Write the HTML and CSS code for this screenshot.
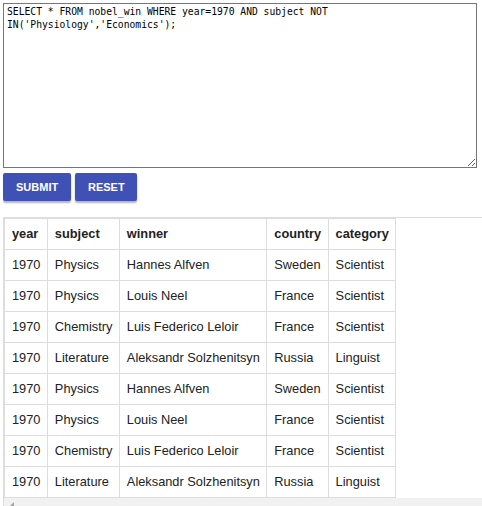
FILE: index.html
```html
<!DOCTYPE html>
<html>
<head>
<meta charset="utf-8">
<link rel="stylesheet" href="styles.css">
</head>
<body>
<textarea class="query">SELECT * FROM nobel_win WHERE year=1970 AND subject NOT IN('Physiology','Economics');</textarea>
<div class="actions">
  <button class="btn">SUBMIT</button>
  <button class="btn">RESET</button>
</div>
<div class="result">
  <table class="grid">
    <thead>
      <tr><th>year</th><th>subject</th><th>winner</th><th>country</th><th>category</th></tr>
    </thead>
    <tbody>
      <tr><td>1970</td><td>Physics</td><td>Hannes Alfven</td><td>Sweden</td><td>Scientist</td></tr>
      <tr><td>1970</td><td>Physics</td><td>Louis Neel</td><td>France</td><td>Scientist</td></tr>
      <tr><td>1970</td><td>Chemistry</td><td>Luis Federico Leloir</td><td>France</td><td>Scientist</td></tr>
      <tr><td>1970</td><td>Literature</td><td>Aleksandr Solzhenitsyn</td><td>Russia</td><td>Linguist</td></tr>
      <tr><td>1970</td><td>Physics</td><td>Hannes Alfven</td><td>Sweden</td><td>Scientist</td></tr>
      <tr><td>1970</td><td>Physics</td><td>Louis Neel</td><td>France</td><td>Scientist</td></tr>
      <tr><td>1970</td><td>Chemistry</td><td>Luis Federico Leloir</td><td>France</td><td>Scientist</td></tr>
      <tr><td>1970</td><td>Literature</td><td>Aleksandr Solzhenitsyn</td><td>Russia</td><td>Linguist</td></tr>
    </tbody>
  </table>
  <div class="hscroll"><span class="hscroll-arrow"></span></div>
</div>
</body>
</html>
```

FILE: styles.css
```css
html {
  overflow: hidden;
}
body {
  margin: 3px 0 0 3px;
  background: #fff;
  font-family: "Liberation Sans", Arial, sans-serif;
}
.query {
  display: block;
  box-sizing: border-box;
  width: 474px;
  height: 165px;
  margin: 0;
  padding: 2px 3px;
  border: 1px solid #767676;
  border-radius: 0;
  font-family: "DejaVu Sans Mono", monospace;
  font-size: 9.7px;
  line-height: 12.5px;
  color: #000;
  resize: both;
}
.actions {
  display: flex;
  gap: 4px;
  margin-top: 5px;
}
.btn {
  height: 28px;
  padding: 0 13px;
  border: none;
  border-radius: 2px;
  background: #3f51b5;
  color: #fff;
  font-family: "Liberation Sans", Arial, sans-serif;
  font-weight: bold;
  font-size: 11px;
  box-shadow: 0 2px 2px rgba(0, 0, 0, 0.3);
}
.btn:first-child {
  width: 68px;
}
.btn:last-child {
  width: 62px;
}
.result {
  box-sizing: border-box;
  width: 100vw;
  margin-top: 16px;
  border: 1px solid #ddd;
  overflow: hidden;
}
.hscroll {
  display: flex;
  align-items: center;
  height: 15px;
  padding-left: 6px;
  background: #f1f1f1;
}
.hscroll-arrow {
  width: 0;
  height: 0;
  border-top: 4px solid transparent;
  border-bottom: 4px solid transparent;
  border-right: 4px solid #a3a3a3;
}
.grid {
  border-collapse: collapse;
  border: 1px solid #ddd;
  font-size: 12.8px;
  line-height: 14px;
  color: #222;
}
.grid th,
.grid td {
  border: 1px solid #ddd;
  padding: 8px 6.4px 8px 7px;
  text-align: left;
  white-space: nowrap;
}
.grid th {
  font-weight: bold;
}
```
